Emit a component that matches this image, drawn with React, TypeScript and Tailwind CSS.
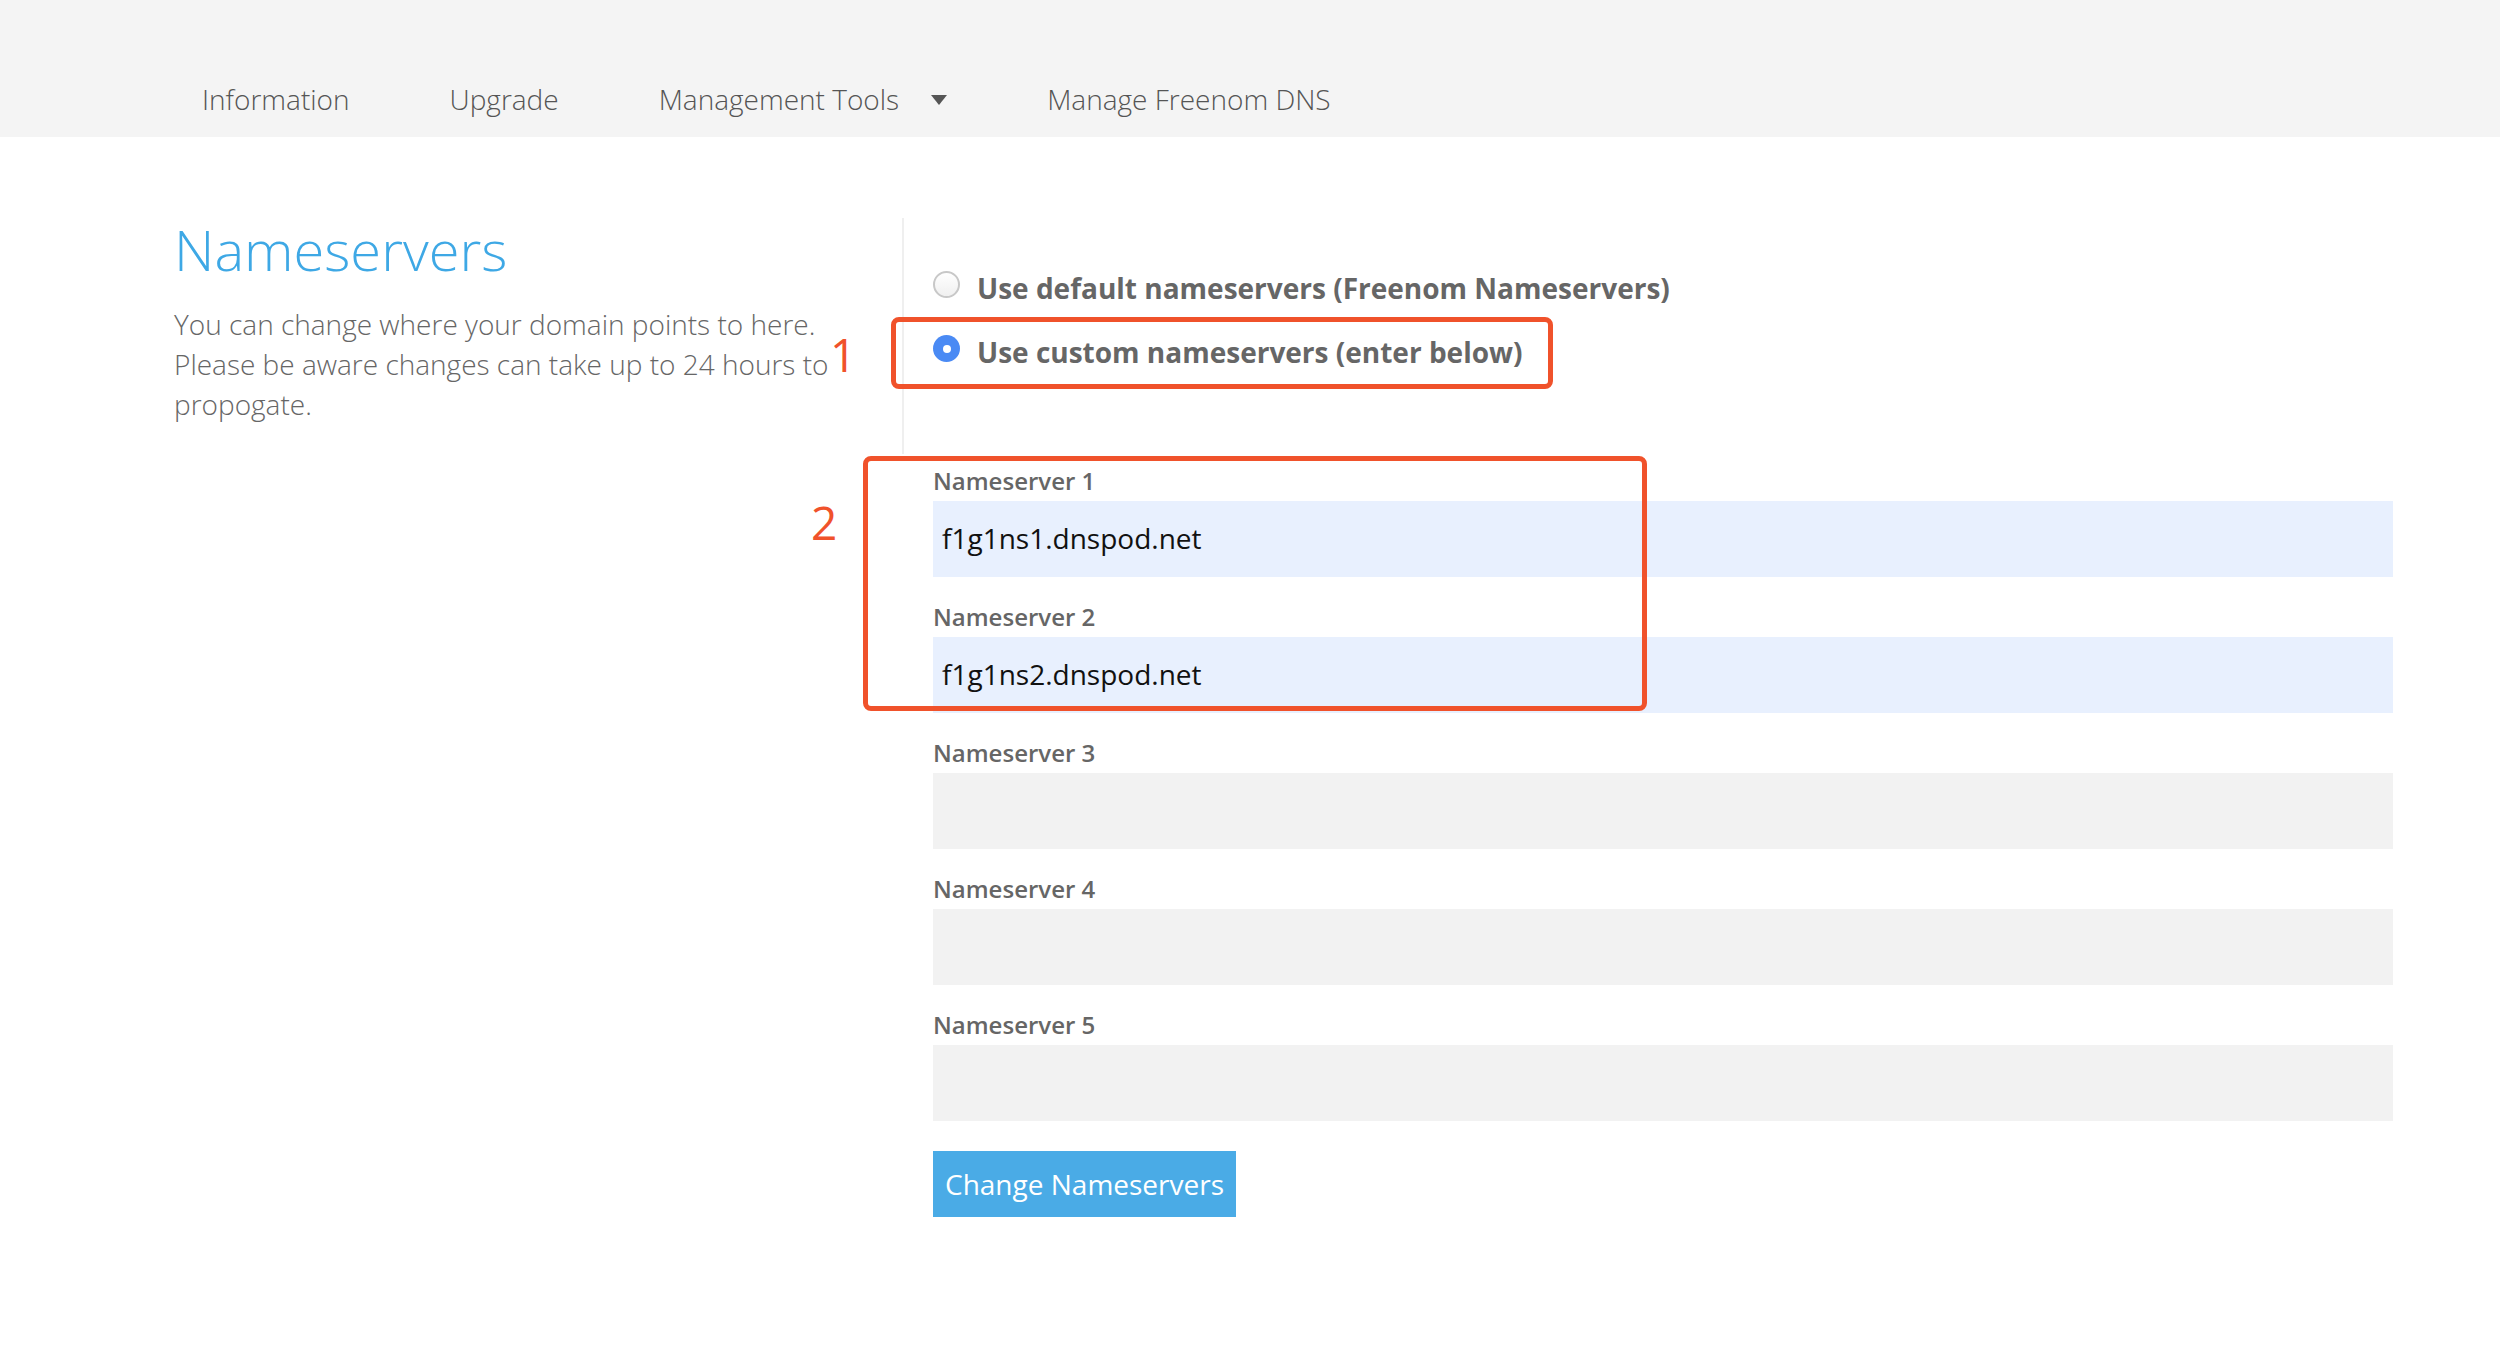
import React from "react";

const navItems = ["Information", "Upgrade", "Management Tools", "Manage Freenom DNS"];

const fields = [
  { label: "Nameserver 1", value: "f1g1ns1.dnspod.net" },
  { label: "Nameserver 2", value: "f1g1ns2.dnspod.net" },
  { label: "Nameserver 3", value: "" },
  { label: "Nameserver 4", value: "" },
  { label: "Nameserver 5", value: "" },
];

function Radio({ checked }: { checked: boolean }) {
  if (checked) {
    return (
      <span className="mt-[3px] flex h-[27px] w-[27px] shrink-0 items-center justify-center rounded-full bg-[#4a8af4]">
        <span className="h-[8px] w-[8px] rounded-full bg-white" />
      </span>
    );
  }
  return (
    <span className="mt-[3px] h-[27px] w-[27px] shrink-0 rounded-full border-2 border-[#c8c8c8] bg-gradient-to-b from-white to-[#f0f0f0]" />
  );
}

export default function App() {
  return (
    <div className="relative min-h-[1354px] w-[2500px] bg-white font-['Open_Sans',sans-serif]">
      {/* Header nav */}
      <header className="h-[137px] bg-[#f4f4f4] pl-[152px] pt-[79px]">
        <nav className="flex">
          {navItems.map((item) => (
            <div key={item} className="flex items-center px-[50px] text-[28px] font-light leading-[40px] text-[#555]">
              {item}
              {item === "Management Tools" && (
                <svg className="ml-[32px] mt-[2px]" width="16" height="10" viewBox="0 0 16 10">
                  <path d="M0 0 L16 0 L8 10 Z" fill="#555" />
                </svg>
              )}
            </div>
          ))}
        </nav>
      </header>

      {/* Main */}
      <main className="flex pl-[174px] pr-[107px] pt-[81px]">
        <section className="w-[728px] shrink-0 pr-[60px]">
          <h1 className="text-[56px] font-light leading-[62px] text-[#3ea8e5]">Nameservers</h1>
          <p className="mt-[24px] text-[28px] font-light leading-[40px] text-[#666]">
            You can change where your domain points to here. Please be aware changes can take up to 24 hours to propogate.
          </p>
        </section>

        <section className="flex-1">
          <div className="flex h-[236px] flex-col gap-[24px] border-l-2 border-[#efefef] pl-[29px] pt-[50px]">
            <label className="flex items-start gap-[17px]">
              <Radio checked={false} />
              <span className="text-[28px] font-bold leading-[40px] text-[#666]">
                Use default nameservers (Freenom Nameservers)
              </span>
            </label>
            <label className="flex items-start gap-[17px]">
              <Radio checked={true} />
              <span className="text-[28px] font-bold leading-[40px] text-[#666]">
                Use custom nameservers (enter below)
              </span>
            </label>
          </div>

          <div className="flex flex-col gap-[22px] pl-[31px] pt-[9px]">
            {fields.map((f) => (
              <div key={f.label}>
                <div className="mb-[2px] text-[24px] font-semibold leading-[36px] text-[#666]">{f.label}</div>
                <div
                  className={`flex h-[76px] items-center px-[9px] pb-[2px] text-[28px] text-[#111] ${
                    f.value ? "bg-[#e8f0fe]" : "bg-[#f2f2f2]"
                  }`}
                >
                  {f.value}
                </div>
              </div>
            ))}
          </div>

          <div className="pl-[31px] pt-[30px]">
            <button className="h-[66px] bg-[#4aabe6] px-[12px] text-[28px] leading-[40px] text-white">
              Change Nameservers
            </button>
          </div>
        </section>
      </main>

      {/* Annotations */}
      <div className="absolute left-[891px] top-[317px] h-[72px] w-[662px] rounded-[8px] border-[5px] border-[#f0522b]" />
      <div className="absolute left-[863px] top-[456px] h-[255px] w-[784px] rounded-[8px] border-[5px] border-[#f0522b]" />
      <div className="absolute left-[830px] top-[326px] text-[46px] leading-[56px] text-[#f0522b]">1</div>
      <div className="absolute left-[811px] top-[494px] text-[46px] leading-[56px] text-[#f0522b]">2</div>
    </div>
  );
}
